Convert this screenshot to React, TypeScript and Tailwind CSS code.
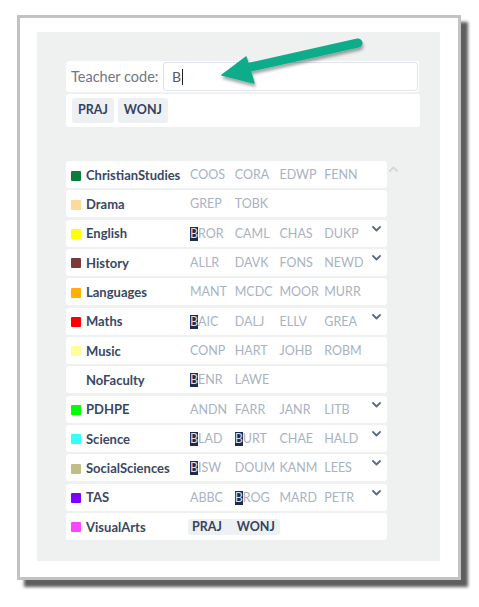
import type { ReactNode } from "react";

type Faculty = {
    name: string;
    color?: string;
    codes: string[];
    more?: boolean;
    tags?: boolean;
};

const faculties: Faculty[] = [
    { name: "ChristianStudies", color: "bg-[#0a7d3b]", codes: ["COOS", "CORA", "EDWP", "FENN"] },
    { name: "Drama", color: "bg-[#fbdb96]", codes: ["GREP", "TOBK"] },
    { name: "English", color: "bg-[#ffff00]", codes: ["BROR", "CAML", "CHAS", "DUKP"], more: true },
    { name: "History", color: "bg-[#7b3b3b]", codes: ["ALLR", "DAVK", "FONS", "NEWD"], more: true },
    { name: "Languages", color: "bg-[#ffb000]", codes: ["MANT", "MCDC", "MOOR", "MURR"] },
    { name: "Maths", color: "bg-[#ff0000]", codes: ["BAIC", "DALJ", "ELLV", "GREA"], more: true },
    { name: "Music", color: "bg-[#ffff99]", codes: ["CONP", "HART", "JOHB", "ROBM"] },
    { name: "NoFaculty", codes: ["BENR", "LAWE"] },
    { name: "PDHPE", color: "bg-[#00ff00]", codes: ["ANDN", "FARR", "JANR", "LITB"], more: true },
    { name: "Science", color: "bg-[#33ffff]", codes: ["BLAD", "BURT", "CHAE", "HALD"], more: true },
    { name: "SocialSciences", color: "bg-[#c2bd88]", codes: ["BISW", "DOUM", "KANM", "LEES"], more: true },
    { name: "TAS", color: "bg-[#8000ff]", codes: ["ABBC", "BROG", "MARD", "PETR"], more: true },
    { name: "VisualArts", color: "bg-[#ff44ff]", codes: ["PRAJ", "WONJ"], tags: true },
];

const query = "B";

function Chevron({ up, className }: { up?: boolean; className?: string }) {
    return (
        <svg width="9" height="6" viewBox="0 0 9 6" className={className}>
            <path
                d={up ? "M1 5 L4.5 1.5 L8 5" : "M1 1 L4.5 4.5 L8 1"}
                fill="none"
                stroke="currentColor"
                strokeWidth="1.8"
                strokeLinecap="round"
                strokeLinejoin="round"
            />
        </svg>
    );
}

function Code({ code }: { code: string }) {
    if (!code.startsWith(query)) return <span>{code}</span>;
    return (
        <span>
            <span className="inline-block bg-[#1c2b4b] text-[#d9dee8] leading-[14px]">
                {code.slice(0, query.length)}
            </span>
            {code.slice(query.length)}
        </span>
    );
}

function Tag({ children, className = "" }: { children: ReactNode; className?: string }) {
    return (
        <span className={`rounded-[3px] bg-[#eef1f3] font-bold text-[#34425e] ${className}`}>
            {children}
        </span>
    );
}

function FacultyRow({ faculty }: { faculty: Faculty }) {
    return (
        <div className="flex h-[27px] items-center rounded-[3px] bg-white pl-[5px] pt-[2px]">
            <span className={`h-[10px] w-[10px] shrink-0 rounded-[1px] ${faculty.color ?? ""}`} />
            <span className="ml-[5px] w-[104px] shrink-0 text-[13px] font-bold text-[#3a4763]">
                {faculty.name}
            </span>
            <div className="grid w-[179px] shrink-0 grid-cols-4 text-[12.5px] text-[#a9b2c2]">
                {faculty.codes.map((code) =>
                    faculty.tags ? (
                        <Tag key={code} className="-ml-[2px] block py-[1px] pl-[4px] leading-[14px]">
                            {code}
                        </Tag>
                    ) : (
                        <Code key={code} code={code} />
                    ),
                )}
            </div>
            {faculty.more ? (
                <Chevron className="mb-[11px] ml-[3px] text-[#5b6a86]" />
            ) : null}
        </div>
    );
}

function Arrow() {
    return (
        <svg
            className="pointer-events-none absolute left-[210px] top-[30px]"
            width="170"
            height="65"
            viewBox="210 30 170 65"
        >
            <defs>
                <filter id="sh" x="-20%" y="-20%" width="140%" height="160%">
                    <feDropShadow dx="1" dy="3" stdDeviation="1.5" floodColor="#000" floodOpacity="0.35" />
                </filter>
            </defs>
            <g filter="url(#sh)" fill="#0cad8b" stroke="#0cad8b">
                <line x1="358" y1="43" x2="246" y2="68" strokeWidth="9" strokeLinecap="round" />
                <polygon points="222,75 246,57 254,83" strokeWidth="1.5" strokeLinejoin="round" />
            </g>
        </svg>
    );
}

export default function App() {
    return (
        <div
            className="relative h-[607px] w-[479px] bg-white pl-[17px] pt-[15px]"
            style={{ fontFamily: "Lato, 'Open Sans', sans-serif" }}
        >
            <div className="h-[565px] w-[444px] border-[3px] border-[#c2c2c2] bg-white pl-[17px] pt-[14px] shadow-[7px_7px_3px_#5e5e5e]">
                <div className="h-[529px] w-[403px] bg-[#eff1f1] pl-[29px] pt-[29px]">
                    <div className="flex h-[31px] w-[353px] items-center rounded-[3px] bg-white pl-[5px]">
                        <span className="w-[92px] text-[14.5px] text-[#707683]">Teacher code:</span>
                        <div className="flex h-[29px] w-[255px] items-center rounded-[3px] border border-[#e0e3ea] pl-[8px] text-[14px] text-[#555c68]">
                            B<span className="ml-[1px] h-[16px] w-[1px] bg-[#222]" />
                        </div>
                    </div>
                    <div className="mt-[2px] flex h-[33px] w-[354px] items-center gap-[4px] rounded-[3px] bg-white pl-[6px]">
                        <Tag className="px-[6px] py-[3px] text-[12.5px]">PRAJ</Tag>
                        <Tag className="px-[6px] py-[3px] text-[12.5px]">WONJ</Tag>
                    </div>
                    <div className="mt-[34px] flex">
                        <div className="flex w-[321px] flex-col gap-[2.33px]">
                            {faculties.map((f) => (
                                <FacultyRow key={f.name} faculty={f} />
                            ))}
                        </div>
                        <Chevron up className="ml-[2px] mt-[5px] text-[#d3d7dd]" />
                    </div>
                </div>
            </div>
            <Arrow />
        </div>
    );
}
